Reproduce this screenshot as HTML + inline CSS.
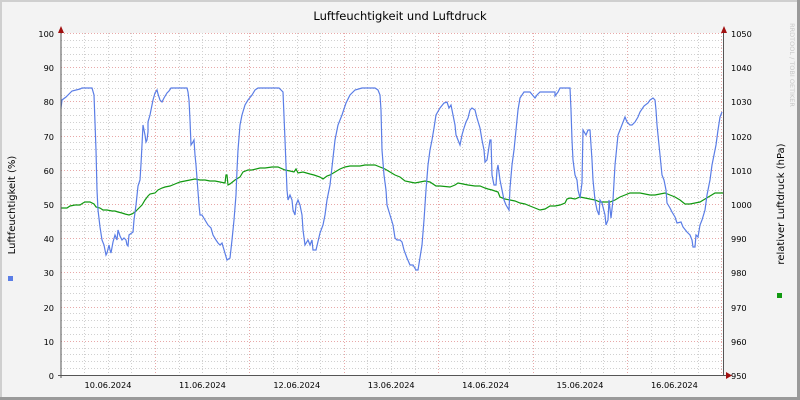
<!DOCTYPE html>
<html><head><meta charset="utf-8"><style>
html,body{margin:0;padding:0;background:#f3f3f3;}
svg{display:block;font-family:"DejaVu Sans","Liberation Sans",sans-serif;}
</style></head><body>
<svg id="g" width="800" height="400" viewBox="0 0 800 400" xmlns="http://www.w3.org/2000/svg">
<rect x="0" y="0" width="800" height="400" fill="#f3f3f3"/>
<rect x="0" y="0" width="800" height="2" fill="#cfcfcf"/>
<rect x="0" y="0" width="2" height="400" fill="#cfcfcf"/>
<rect x="0" y="397" width="800" height="3" fill="#9a9a9a"/>
<rect x="797" y="0" width="3" height="400" fill="#9a9a9a"/>
<rect x="61" y="33" width="662" height="342" fill="#ffffff"/>
<g id="grid"></g>
<text x="400" y="20" font-size="11.5" text-anchor="middle" fill="#000">Luftfeuchtigkeit und Luftdruck</text>
<g id="labels" font-size="8.2" fill="#000"></g>
<text transform="translate(15,205) rotate(-90)" font-size="10" text-anchor="middle">Luftfeuchtigkeit (%)</text>
<text transform="translate(784,204) rotate(-90)" font-size="10" text-anchor="middle">relativer Luftdruck (hPa)</text>
<text transform="translate(790,65) rotate(90)" font-size="6.5" text-anchor="middle" fill="#c8c8c8">RRDTOOL / TOBI OETIKER</text>
<rect x="8" y="276" width="5" height="5" fill="#5a7de6"/>
<rect x="777" y="293" width="5" height="5" fill="#119911"/>
<polyline fill="none" stroke="#119911" stroke-width="1.2" points="61,208 67,208 70,206 75,205 80,205 83,203 85,202 90,202 94,204 96,207 100,208 103,210 107,210 112,211 115,211 118,212 122,213 125,214 129,215 132,214 135,212 137,210 140,207 142,205 145,200 148,196 150,194 155,193 158,190 162,188 165,187 170,186 175,184 180,182 185,181 190,180 195,179 200,180 205,180 210,181 215,181 220,182 225,183 226,175 227,175 228,185 230,184 235,180 240,177 243,172 248,170 252,170 260,168 265,168 272,167 278,167 285,170 290,171 294,172 296,169 298,173 303,172 310,174 314,175 320,177 323,179 327,176 330,175 335,172 340,169 345,167 350,166 360,166 365,165 370,165 375,165 380,167 385,169 390,172 395,175 400,177 405,181 410,182 415,183 420,182 425,181 430,182 436,186 440,186 450,187 455,185 458,183 463,184 468,185 475,186 480,186 485,188 488,189 492,190 498,192 500,197 505,199 510,200 515,201 520,203 525,204 530,206 535,208 540,210 545,209 550,206 555,206 560,205 565,203 567,199 570,198 575,199 580,197 585,198 590,199 595,200 600,202 605,202 610,202 615,200 620,197 625,195 630,193 640,193 645,194 650,195 655,195 660,194 665,193 670,195 675,197 680,200 685,204 690,204 695,203 700,202 705,199 710,196 715,193 723,193"/>
<polyline fill="none" stroke="#5a7de6" stroke-width="1.2" points="61,108 62,100 66,97 70,93 72,91 80,89 82,88 92,88 94,95 96,150 97,190 98,210 100,227 102,240 104,245 106,255 107,253 109,245 110,250 111,253 113,242 115,235 117,240 118,230 120,236 122,240 124,238 126,240 127,245 128,246 129,235 133,232 134,220 136,205 138,186 140,180 141,164 142,145 143,125 145,135 146,142 147,140 148,132 148,122 150,115 153,100 155,93 157,90 158,94 160,100 162,102 164,98 167,93 169,91 171,88 187,88 188,92 189,100 190,120 191,145 193,142 194,140 195,155 196,165 199,205 200,215 202,215 205,220 208,225 211,228 213,235 216,240 218,243 220,245 222,243 227,260 230,258 232,240 234,220 236,195 237,170 238,150 240,125 242,115 245,105 248,100 252,95 255,90 258,88 279,88 283,92 285,140 287,190 288,200 290,195 292,200 293,210 295,215 296,205 298,200 300,205 302,215 303,230 305,245 308,240 310,245 312,240 313,250 316,250 320,233 323,225 325,215 327,200 330,185 333,158 335,140 338,125 342,115 346,103 350,95 355,90 362,88 375,88 378,90 380,95 381,110 382,150 384,175 386,190 387,205 390,215 393,225 395,238 397,240 400,240 402,242 404,250 407,258 410,265 413,265 416,270 418,270 422,245 424,220 426,190 428,165 430,150 432,140 434,128 436,115 440,108 444,103 447,102 449,108 451,105 453,115 455,125 456,135 458,140 460,145 462,135 464,128 466,122 468,118 470,110 472,108 475,110 477,118 480,128 482,140 484,150 485,162 487,160 490,140 491,140 492,175 494,185 496,185 497,170 498,165 500,180 502,190 504,200 506,205 509,210 510,188 512,165 514,150 516,130 518,110 520,98 522,95 524,92 530,92 535,98 537,95 540,92 555,92 555,96 558,92 560,88 570,88 571,110 572,140 573,160 575,175 577,180 578,190 580,198 582,183 583,130 586,135 588,130 590,130 592,160 593,180 595,200 597,210 599,215 600,200 602,203 605,215 606,225 608,220 609,200 611,218 613,200 615,165 617,145 618,135 620,130 625,117 627,122 630,125 632,125 635,122 638,117 640,112 644,106 648,103 650,100 653,98 655,100 656,110 657,125 659,145 661,165 662,175 664,180 666,190 667,203 670,208 672,212 675,217 677,223 681,222 683,227 687,232 690,235 692,240 693,247 695,247 696,235 698,237 700,225 702,220 705,210 707,195 710,180 712,165 714,155 716,145 718,130 720,117 722,112"/>
<line x1="61" y1="30" x2="61" y2="378" stroke="#555" stroke-width="1"/>
<line x1="723.5" y1="30" x2="723.5" y2="375" stroke="#555" stroke-width="1"/>
<line x1="58" y1="375.5" x2="727" y2="375.5" stroke="#555" stroke-width="1"/>
<polygon points="58,33 64,33 61,26" fill="#a01010"/>
<polygon points="721,33 727,33 724,26" fill="#a01010"/>
<polygon points="726,372 726,379 732,375.5" fill="#a01010"/>
</svg>
<script>
var ns="http://www.w3.org/2000/svg",g=document.getElementById("grid"),L=document.getElementById("labels");
function ln(x1,y1,x2,y2,c){var l=document.createElementNS(ns,"line");l.setAttribute("x1",x1);l.setAttribute("y1",y1);l.setAttribute("x2",x2);l.setAttribute("y2",y2);l.setAttribute("stroke",c);l.setAttribute("stroke-width","1");l.setAttribute("stroke-dasharray","1,2");g.appendChild(l);}
function tx(x,y,s,a){var t=document.createElementNS(ns,"text");t.setAttribute("x",x);t.setAttribute("y",y);t.setAttribute("text-anchor",a);t.textContent=s;L.appendChild(t);}
for(var v=0;v<=100;v+=2){var y=Math.round(375-v*3.42)+0.5;var maj=v%10==0;if(v>0)ln(61,y,723,y,maj?"#e8a8a8":"#d0d0d0");
 if(maj){tx(54,y+3.5,String(v),"end");tx(731,y+3.5,String(950+v),"start");}}
for(var i=1;i<29;i++){var x=Math.round(60.5+i*23.6)+0.5;ln(x,33,x,375,i%4==0?"#e8a8a8":"#d0d0d0");}
var d=["10.06.2024","11.06.2024","12.06.2024","13.06.2024","14.06.2024","15.06.2024","16.06.2024"];
for(var k=0;k<7;k++)tx(108+k*94.4,388,d[k],"middle");
</script>
</body></html>
